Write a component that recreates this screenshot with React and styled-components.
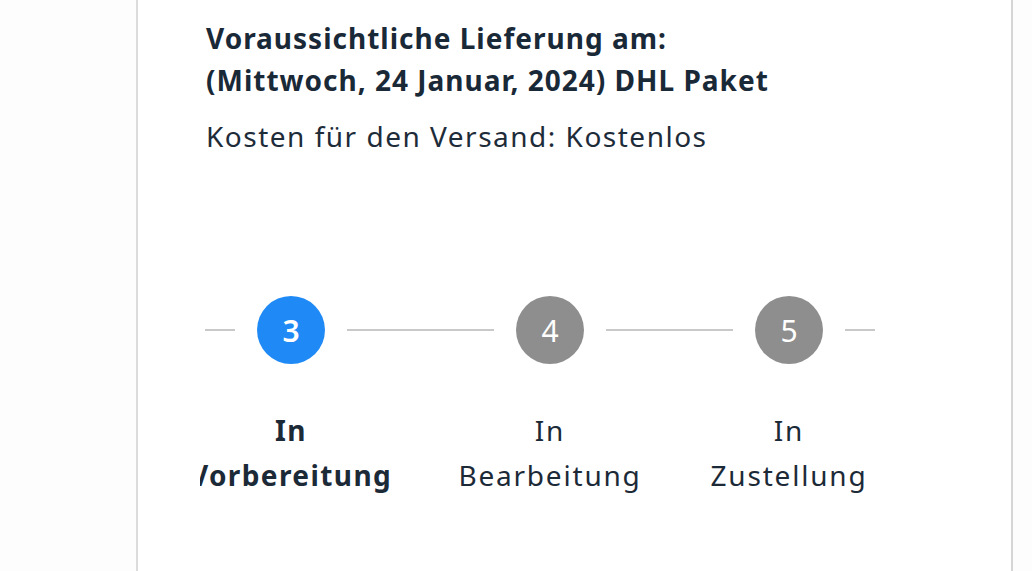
import styled, { createGlobalStyle } from "styled-components";

const GlobalStyle = createGlobalStyle`
  html, body {
    margin: 0;
    padding: 0;
    background: #ffffff;
  }
  body {
    font-family: "Noto Sans", "Open Sans", sans-serif;
    color: #1c2a38;
  }
`;

const steps = [
  { num: 3, first: "In", second: "Vorbereitung", active: true, before: 30 },
  { num: 4, first: "In", second: "Bearbeitung", active: false, before: 147 },
  { num: 5, first: "In", second: "Zustellung", active: false, before: 127 },
];

const App = () => {
  return (
    <Page>
      <GlobalStyle />
      <Card>
        <Title>
          Voraussichtliche Lieferung am:
          <br />
          (Mittwoch, 24 Januar, 2024) DHL Paket
        </Title>
        <Shipping>Kosten für den Versand: Kostenlos</Shipping>

        <Stepper>
          <Track>
            {steps.map((s) => (
              <Fragmented key={s.num}>
                <Line $width={s.before} />
                <Step>
                  <Circle $active={s.active}>{s.num}</Circle>
                  <Label $active={s.active}>
                    {s.first}
                    <br />
                    {s.second}
                  </Label>
                </Step>
              </Fragmented>
            ))}
            <Line $width={30} />
          </Track>
        </Stepper>
      </Card>
    </Page>
  );
};

const Page = styled.div`
  display: flex;
  height: 571px;
  padding-left: 136px;
  overflow: hidden;
  background: #fdfdfd;
`;

const Card = styled.div`
  width: 805px;
  height: 100%;
  background: #ffffff;
  border-left: 2px solid #dcdcdc;
  border-right: 2px solid #d6d6d6;
  padding: 17px 0 0 68px;
  box-sizing: content-box;
  display: flex;
  flex-direction: column;
`;

const Title = styled.div`
  font-size: 28px;
  line-height: 42px;
  font-weight: 700;
  letter-spacing: 1px;
  color: #1a2937;
`;

const Shipping = styled.div`
  margin-top: 14px;
  font-size: 28px;
  line-height: 42px;
  font-weight: 400;
  letter-spacing: 1.5px;
  color: #1e2c3a;
`;

const Stepper = styled.div`
  margin-top: 139px;
  margin-left: -6px;
  width: 681px;
  overflow: hidden;
`;

const Track = styled.div`
  display: flex;
  align-items: flex-start;
  gap: 22px;
  padding-left: 5px;
`;

const Fragmented = styled.div`
  display: contents;
`;

const Line = styled.div`
  flex: none;
  width: ${(p) => p.$width}px;
  height: 2px;
  margin-top: 33px;
  background: #c9c9c9;
`;

const Step = styled.div`
  flex: none;
  width: 68px;
  display: flex;
  flex-direction: column;
  align-items: center;
`;

const Circle = styled.div`
  width: 68px;
  height: 68px;
  border-radius: 50%;
  background: ${(p) => (p.$active ? "#1f8af5" : "#8e8e8e")};
  color: #ffffff;
  font-size: 30px;
  font-weight: ${(p) => (p.$active ? 600 : 400)};
  display: flex;
  align-items: center;
  justify-content: center;
`;

const Label = styled.div`
  margin-top: 44px;
  white-space: nowrap;
  text-align: center;
  font-size: 28px;
  line-height: 45px;
  font-weight: ${(p) => (p.$active ? 700 : 400)};
  letter-spacing: ${(p) => (p.$active ? "1.4px" : "1.8px")};
  color: #1c2a38;
`;

export default App;
